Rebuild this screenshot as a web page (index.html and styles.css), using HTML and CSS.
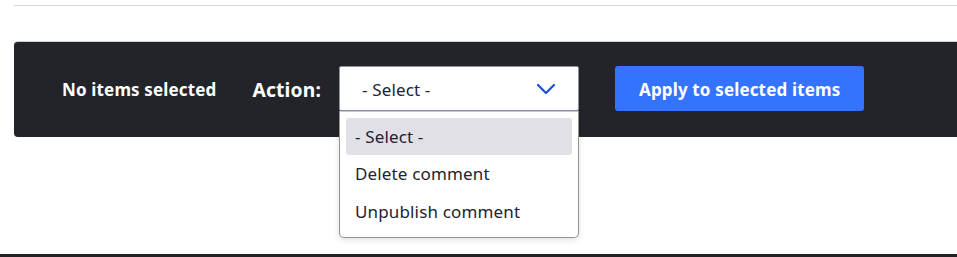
FILE: index.html
```html
<!DOCTYPE html>
<html lang="en">
<head>
  <meta charset="UTF-8" />
  <title>Bulk actions</title>
  <link rel="stylesheet" href="styles.css">
</head>
<body>

<div class="page">
  <div class="rule"></div>

  <form class="bulk-form">
    <div class="bulk-bar">
      <span class="bulk-count">No items selected</span>
      <label class="bulk-label">Action:</label>
      <div class="select-wrap">
        <div class="select-box">
          <span>- Select -</span>
          <svg class="chevron" width="20" height="12" viewBox="0 0 20 12">
            <path d="M2 2 L10 10 L18 2" fill="none" stroke="#1a4fd6" stroke-width="2.2" stroke-linecap="round" stroke-linejoin="round"/>
          </svg>
        </div>
        <ul class="select-menu">
          <li class="active">- Select -</li>
          <li>Delete comment</li>
          <li>Unpublish comment</li>
        </ul>
      </div>
      <button type="button" class="button">Apply to selected items</button>
    </div>
  </form>
</div>

<div class="bottom-strip"></div>

</body>
</html>
```

FILE: styles.css
```css
* { margin: 0; padding: 0; box-sizing: border-box; }

body {
  font-family: 'Noto Sans', 'Open Sans', sans-serif;
  font-size: 17px;
  letter-spacing: 0.15px;
  background: #fff;
  color: #222330;
  height: 257px;
  overflow: hidden;
  display: flex;
  flex-direction: column;
}

.page {
  flex: 1;
  padding: 5px 0 0 14px;
}

.rule {
  height: 1px;
  background: #d8d8dc;
}

.bulk-form {
  margin-top: 35px;
}

.bulk-bar {
  display: flex;
  align-items: flex-start;
  height: 96px;
  padding: 24px 0 0 48px;
  background: #232429;
  border-top: 1px solid #d0d0d6;
  border-radius: 4px 0 0 4px;
}

.bulk-count,
.bulk-label {
  display: flex;
  align-items: center;
  height: 47px;
  color: #fff;
  font-weight: 700;
}

.bulk-count {
  font-size: 17px;
  margin-right: 36px;
}

.bulk-label {
  font-size: 19.3px;
  margin-right: 18px;
}

.select-wrap {
  position: relative;
  width: 240px;
  margin-right: 36px;
}

.select-box {
  display: flex;
  align-items: center;
  justify-content: space-between;
  height: 45px;
  padding: 1px 22px 0;
  background: #fff;
  border: 1px solid #8e929c;
  border-radius: 2px;
  color: #222330;
}

.chevron {
  display: block;
}

.select-menu {
  position: absolute;
  top: 45px;
  left: 0;
  width: 240px;
  list-style: none;
  background: #fff;
  border: 1px solid #919297;
  border-top-color: #c8c8cc;
  border-radius: 0 0 5px 5px;
  padding: 6px 6px 6px;
  box-shadow: 0 2px 6px rgba(0,0,0,0.12);
  z-index: 10;
}

.select-menu li {
  height: 38px;
  line-height: 38px;
  padding: 0 9px;
  color: #222330;
  border-radius: 3px;
}

.select-menu li.active {
  background: #e1e0e6;
  height: 37px;
  line-height: 37px;
}

.button {
  height: 45px;
  padding: 1px 24px 0;
  background: #3573ff;
  color: #fff;
  font-family: inherit;
  font-size: 17px;
  font-weight: 700;
  letter-spacing: inherit;
  border: none;
  border-radius: 3px;
  cursor: pointer;
}

.bottom-strip {
  height: 3px;
  background: #222226;
}
```
